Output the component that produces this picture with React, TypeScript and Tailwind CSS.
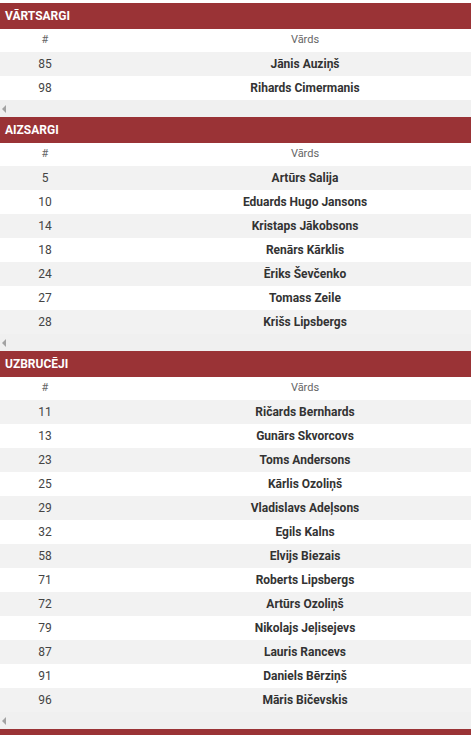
const sections = [
  {
    title: "Vārtsargi",
    players: [
      ["85", "Jānis Auziņš"],
      ["98", "Rihards Cimermanis"],
    ],
  },
  {
    title: "Aizsargi",
    players: [
      ["5", "Artūrs Salija"],
      ["10", "Eduards Hugo Jansons"],
      ["14", "Kristaps Jākobsons"],
      ["18", "Renārs Kārklis"],
      ["24", "Ēriks Ševčenko"],
      ["27", "Tomass Zeile"],
      ["28", "Krišs Lipsbergs"],
    ],
  },
  {
    title: "Uzbrucēji",
    players: [
      ["11", "Ričards Bernhards"],
      ["13", "Gunārs Skvorcovs"],
      ["23", "Toms Andersons"],
      ["25", "Kārlis Ozoliņš"],
      ["29", "Vladislavs Adeļsons"],
      ["32", "Egils Kalns"],
      ["58", "Elvijs Biezais"],
      ["71", "Roberts Lipsbergs"],
      ["72", "Artūrs Ozoliņš"],
      ["79", "Nikolajs Jeļisejevs"],
      ["87", "Lauris Rancevs"],
      ["91", "Daniels Bērziņš"],
      ["96", "Māris Bičevskis"],
    ],
  },
]

function Section({ title, players }: { title: string; players: string[][] }) {
  return (
    <div>
      <div className="h-[26px] bg-[#9a3336] px-[5px] flex items-center text-white font-bold text-[12px] uppercase">
        {title}
      </div>
      <div className="overflow-hidden">
        <table className="w-[520px] border-collapse text-[12px] text-[#333]">
          <thead>
            <tr className="h-[23px] bg-white">
              <th className="w-[90px] font-normal text-[11px] text-[#666]">#</th>
              <th className="font-normal text-[11px] text-[#666]">Vārds</th>
            </tr>
          </thead>
          <tbody>
            {players.map((p, idx) => (
              <tr key={idx} className={"h-[24px] " + (idx % 2 === 0 ? "bg-[#f2f2f2]" : "bg-white")}>
                <td className="text-center text-[#444]">{p[0]}</td>
                <td className="text-center font-bold">{p[1]}</td>
              </tr>
            ))}
          </tbody>
        </table>
      </div>
      <div className="h-[17px] bg-[#f0f0f0] flex items-center pl-[2px]">
        <div className="w-0 h-0 border-y-[4px] border-y-transparent border-r-[4px] border-r-[#a3a3a3]" />
      </div>
    </div>
  )
}

export default function App() {
  return (
    <div className="w-[471px] bg-white pt-[3px]" style={{ fontFamily: "Roboto, 'Liberation Sans', sans-serif" }}>
      {sections.map((s) => (
        <Section key={s.title} title={s.title} players={s.players} />
      ))}
      <div className="h-[26px] bg-[#9a3336]" />
    </div>
  )
}
